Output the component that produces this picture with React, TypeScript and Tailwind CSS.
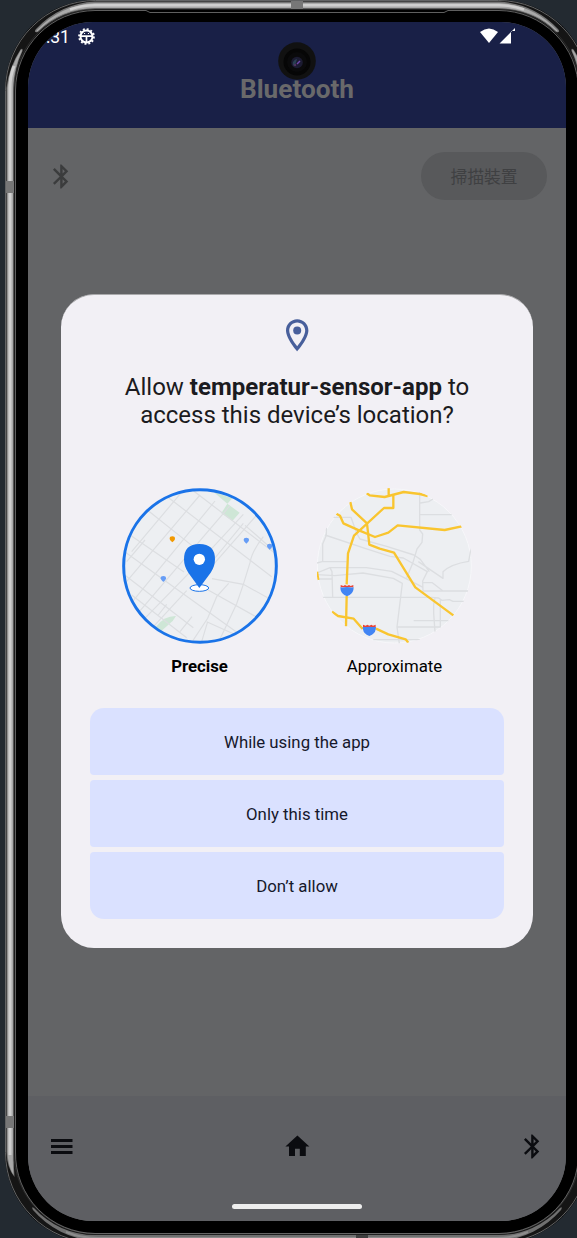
import React from "react";
import { MdBluetooth, MdOutlineLocationOn } from "react-icons/md";

const font = "font-['Roboto','Noto_Sans_CJK_TC',sans-serif]";

function BezelHighlights() {
  return (
    <g>
      <path d="M6.500 600V88A88 88 0 0 1 20.500 49.500Q23 47.500 22.500 51Q14.500 68 14 88V600Z" fill="#777777" />
      <path d="M7.500 600V88A87 87 0 0 1 21 50L22 50.500Q13.500 68 13 88V600Z" fill="#a9a9a9" />
      <path d="M10 600V88Q10 76 14 66" stroke="#cfcfcf" strokeWidth="3" />
      <path d="M298 1.500H95A88 88 0 0 0 36 29Q33 33 38 32Q61 9.500 95 9H298Z" fill="#777777" />
      <path d="M298 3H95A87 87 0 0 0 37 30Q35 33 39 30Q61 8.500 95 8H298Z" fill="#aaaaaa" />
      <path d="M298 5.300H95Q82 5.300 70 9.500" stroke="#cfcfcf" strokeWidth="2.500" />
      <path d="M6.500 600V1152Q7 1168 14.500 1177Q13.500 1164 14 1152V600Z" fill="#777777" />
      <path d="M7.500 600V1152Q8 1166 13.500 1175Q12.500 1163 13 1152V600Z" fill="#a9a9a9" />
      <path d="M10 600V1155" stroke="#cfcfcf" strokeWidth="3" />
      <path d="M298 1235H95A83 83 0 0 1 34 1208Q31 1206 33 1210A90 90 0 0 0 95 1241H298Z" fill="#707070" />
      <path d="M298 1238H98Q80 1238 66 1232" stroke="#8c8c8c" strokeWidth="2" />
    </g>
  );
}

function Bezel() {
  return (
    <svg className="pointer-events-none absolute left-0 top-0" width="600" height="1250" viewBox="0 0 600 1250" fill="none">
      <rect x="10" y="5" width="574" height="1233" rx="86" stroke="#151515" strokeWidth="10" />
      <rect x="5.500" y="0.500" width="583" height="1242" rx="90" stroke="#77797a" strokeWidth="0.800" />
      <BezelHighlights />
      <g transform="translate(594 0) scale(-1 1)"><BezelHighlights /></g>
      <rect x="13.800" y="9" width="566.400" height="1225" rx="82" stroke="#333333" strokeWidth="0.700" />
      <path d="M15.500 90V1152A80 80 0 0 0 95 1233.500H499A80 80 0 0 0 578.500 1152V90A80 80 0 0 0 499 10.500H448L444 12.500H150L146 10.500H95A80 80 0 0 0 15.500 90Z" stroke="#777777" strokeWidth="0.800" />
      <path d="M6 187H14M6 1122H14" stroke="#777777" strokeWidth="12" />
      <path d="M297 1V9" stroke="#777777" strokeWidth="12" />
      <path d="M362 1235V1242" stroke="#3f3f3f" strokeWidth="12" />
    </svg>
  );
}

function Gear() {
  return (
    <svg className="ml-[7px]" width="17" height="17" viewBox="0 0 24 24" fill="none" stroke="#ffffff">
      <circle cx="12" cy="12" r="8.500" strokeWidth="2.800" />
      <circle cx="12" cy="12" r="10.500" strokeWidth="2.600" strokeDasharray="2.749 2.749" />
      <path d="M4 11.500H20M12 12V20" strokeWidth="2.400" />
      <path d="M8.500 7.800H10M14 7.800H15.500" strokeWidth="1.500" />
    </svg>
  );
}

function Camera() {
  return (
    <svg className="absolute left-[250px] top-[20px]" width="38" height="38" viewBox="0 0 38 38">
      <circle cx="19" cy="19" r="18.800" fill="#111111" />
      <circle cx="19" cy="20" r="13.500" fill="#060606" />
      <circle cx="19" cy="20" r="10" fill="#0a0a0b" />
      <circle cx="19" cy="20.500" r="5.800" fill="#1b1b31" />
      <path d="M15 20Q17 17 19 17L17 24Q14 24 15 20Z" fill="#294052" />
      <path d="M19 22L22 19" stroke="#7146ad" strokeWidth="1.400" />
      <circle cx="17" cy="23" r="1.300" fill="#4c315c" />
    </svg>
  );
}

function Marker({ x, y, color }: { x: number; y: number; color: string }) {
  return <path transform={`translate(${x} ${y})`} d="M0 10L-5 5Q-8 2-8-1Q-8-8 0-8Q8-8 8-1Q8 2 5 5Z" fill={color} />;
}

function PreciseMap() {
  return (
    <svg width="156" height="156" viewBox="36 39 468 468" fill="none">
      <defs><clipPath id="precise"><circle cx="270" cy="273" r="230" /></clipPath></defs>
      <circle cx="270" cy="273" r="230" fill="#edeff2" />
      <g clipPath="url(#precise)">
        <path d="M310 50L367 70L352 86L389 113L367 138L334 115L352 86Z" fill="#cee6d6" />
        <path d="M139 454Q164 422 198 423L188 438L154 468L139 464Z" fill="#cee6d6" />
        <g stroke="#dcdee1" strokeWidth="3.500">
          <path d="M165 60L485 305M112 105L245 211M250 47L495 235M60 180L222 291M46 232L395 482M44 300L250 458M65 360L230 488M306 311L400 328L500 383M289 342L500 460" />
          <path d="M270 60L45 325M315 78L55 395M360 92L75 425M400 118L239 292L95 440M440 120L300 280M400 145L278 294M105 195L50 260M212 55L65 230M230 347L122 464M170 388L145 420M246 425L210 470M356 325L320 365L293 430L240 510" />
          <path d="M460 185Q425 230 420 263L400 328L380 386L350 450L326 500M405 151L435 177L500 235M290 440L370 476M293 440L275 500" />
        </g>
        <Marker x={187} y={192} color="#f29900" />
        <Marker x={409} y={196} color="#669df6" />
        <Marker x={479} y={214} color="#669df6" />
        <Marker x={160} y={311} color="#669df6" />
        <ellipse cx="268" cy="339" rx="28" ry="10" fill="#ffffff" stroke="#1a73e8" strokeWidth="3" />
        <path d="M268 339L235 293Q222 275 222 253Q222 207 268 207Q315 207 315 253Q315 275 302 293Z" fill="#1a73e8" />
        <circle cx="268" cy="253" r="17" fill="#ffffff" />
      </g>
      <circle cx="270" cy="273" r="229" stroke="#1a73e8" strokeWidth="9" />
    </svg>
  );
}

function Shield({ x, y }: { x: number; y: number }) {
  return (
    <g transform={`translate(${x} ${y})`}>
      <path d="M-19 4V-3L-11 0L-6-3L0 0L6-3L11 0L19-3V4Z" fill="#ea4335" />
      <path d="M-20 4Q-10 5 0 3Q10 5 20 4Q20 20 8 27L0 31L-8 27Q-20 20-20 4Z" fill="#4285f4" />
    </g>
  );
}

function ApproximateMap() {
  return (
    <svg width="156" height="156" viewBox="36 39 468 468" fill="none">
      <defs><clipPath id="approximate"><circle cx="268" cy="273" r="234" /></clipPath></defs>
      <circle cx="268" cy="273" r="231" fill="#edeff2" stroke="#f7f7fa" strokeWidth="3" />
      <g clipPath="url(#approximate)">
        <g stroke="#dcdee1" strokeWidth="4" strokeLinejoin="round">
          <path d="M344 50V165L353 177L351 202L336 222L323 265L305 308M344 119H440M346 84L371 80L384 72" />
          <path d="M85 127H138L155 175L165 192L245 214L327 240L346 253L373 290M340 260L414 310V290Q438 267 491 259L498 220" />
          <path d="M60 180L180 220L255 244L295 249L367 290L353 318L354 350M64 158V181L53 207V260H125M36 264L51 260M36 294L75 278L81 290L83 367M75 278H184L260 289L315 317L354 337M36 299L89 302L174 294L265 310L292 325L276 456L283 505" />
          <path d="M52 367H380L401 369L411 376L433 374L444 379H480M354 323H382L414 348M354 348H490M390 369L386 388V415L390 470M406 376V456H276M326 437H430M40 312H82M205 494H345" />
        </g>
        <g stroke="#f9c52f" strokeWidth="7" strokeLinejoin="round">
          <path d="M36 290L40 315M185 55L194 61L239 66L296 51L345 57L368 63M251 39V62M265 60V99H237L147 182L129 235L125 328M125 363L123 454M136 81L141 103L186 145L193 209L224 221L267 233L331 337L445 421" />
          <path d="M94 116L105 122L115 145L162 166L210 186L250 173L278 151L419 165L470 154M81 410L99 423L146 431L173 462M213 461L250 478L302 493L310 503" />
        </g>
        <Shield x={126} y={333} />
        <Shield x={193} y={452} />
      </g>
    </svg>
  );
}

function PermissionDialog() {
  return (
    <section className="absolute left-[33px] top-[272px] flex h-[654px] w-[472px] flex-col items-center rounded-[33px] border-t border-[#aaaaac] bg-[#f2f0f5] pt-[21px] text-[#1b1b20]">
      <MdOutlineLocationOn className="size-[38.4px] text-[#485f9b]" />
      <h2 className="mt-[18.6px] text-center text-[24px] leading-[28.5px]">
        Allow <b className="font-bold">temperatur-sensor-app</b> to<br />access this device’s location?
      </h2>
      <div className="mt-[58px] flex gap-[39px] text-center text-[16.8px] leading-[24px] text-black">
        <div><PreciseMap /><p className="mt-[10px] font-bold">Precise</p></div>
        <div><ApproximateMap /><p className="mt-[10px]">Approximate</p></div>
      </div>
      <div className="mt-[30px] flex w-[414px] flex-col gap-[5px] text-[16.8px] text-[#15182b]">
        <button className="h-[67px] rounded-t-[14px] rounded-b-[4px] bg-[#dae1ff] pt-[2px]">While using the app</button>
        <button className="h-[67px] rounded-[4px] bg-[#dae1ff] pt-[2px]">Only this time</button>
        <button className="h-[67px] rounded-b-[14px] rounded-t-[4px] bg-[#dae1ff] pt-[2px]">Don’t allow</button>
      </div>
    </section>
  );
}

export default function App() {
  return (
    <div className={`relative h-[1238px] w-[577px] overflow-hidden bg-[#232a31] ${font}`}>
      <div className="ml-[5px] h-[1243px] w-[584px] rounded-[90px] bg-black pl-[23px] pt-[22px]">
        <main className="relative flex h-[1199px] w-[538px] flex-col overflow-hidden rounded-[65px] bg-[#636466]">
          <header className="h-[106px] bg-[#192047]">
            <div className="flex h-[28px] items-center pl-[18px] pr-[50px] text-[17.5px] text-white">
              <span className="w-[25px] pt-[2px]">:31</span>
              <Gear />
              <svg className="ml-auto" width="36" height="16" viewBox="0 0 36 16" fill="#ffffff">
                <path d="M0 4Q9-3 18 4L9 15Z" />
                <path d="M19.500 15.500L31 4V15.500ZM31 4L35 0V3H31Z" />
              </svg>
            </div>
            <h1 className="mt-[23px] text-center text-[26.2px] font-bold leading-[32px] text-[#69696a]">Bluetooth</h1>
          </header>
          <div className="flex h-[96px] items-center justify-between px-[19px]">
            <MdBluetooth className="size-[28.8px] text-[#3b3c3d]" />
            <button className="h-[48px] w-[126px] rounded-full bg-[#58595b] pt-[4px] text-[16.8px] text-[#3f4042]">掃描裝置</button>
          </div>
          <nav className="mt-auto flex h-[125px] flex-col bg-[#5e5f63] text-[#0b0c10]">
            <div className="flex h-[100px] items-center justify-between px-[19px]">
              <svg className="size-[29px]" viewBox="0 0 29 29" fill="currentColor">
                <path d="M4 7H25.500V10H4ZM4 13H25.500V16H4ZM4 19H25.500V22H4Z" />
              </svg>
              <svg className="size-[28.8px]" viewBox="0 0 24 24" fill="currentColor">
                <path d="M10 20V14H14V20H19V12H22L12 3L2 12H5V20Z" />
              </svg>
              <MdBluetooth className="size-[28.8px]" />
            </div>
            <div className="mx-auto mt-[8px] h-[5px] w-[130px] rounded-full bg-[#eeeeee]" />
          </nav>
          <Camera />
          <PermissionDialog />
        </main>
      </div>
      <Bezel />
    </div>
  );
}
